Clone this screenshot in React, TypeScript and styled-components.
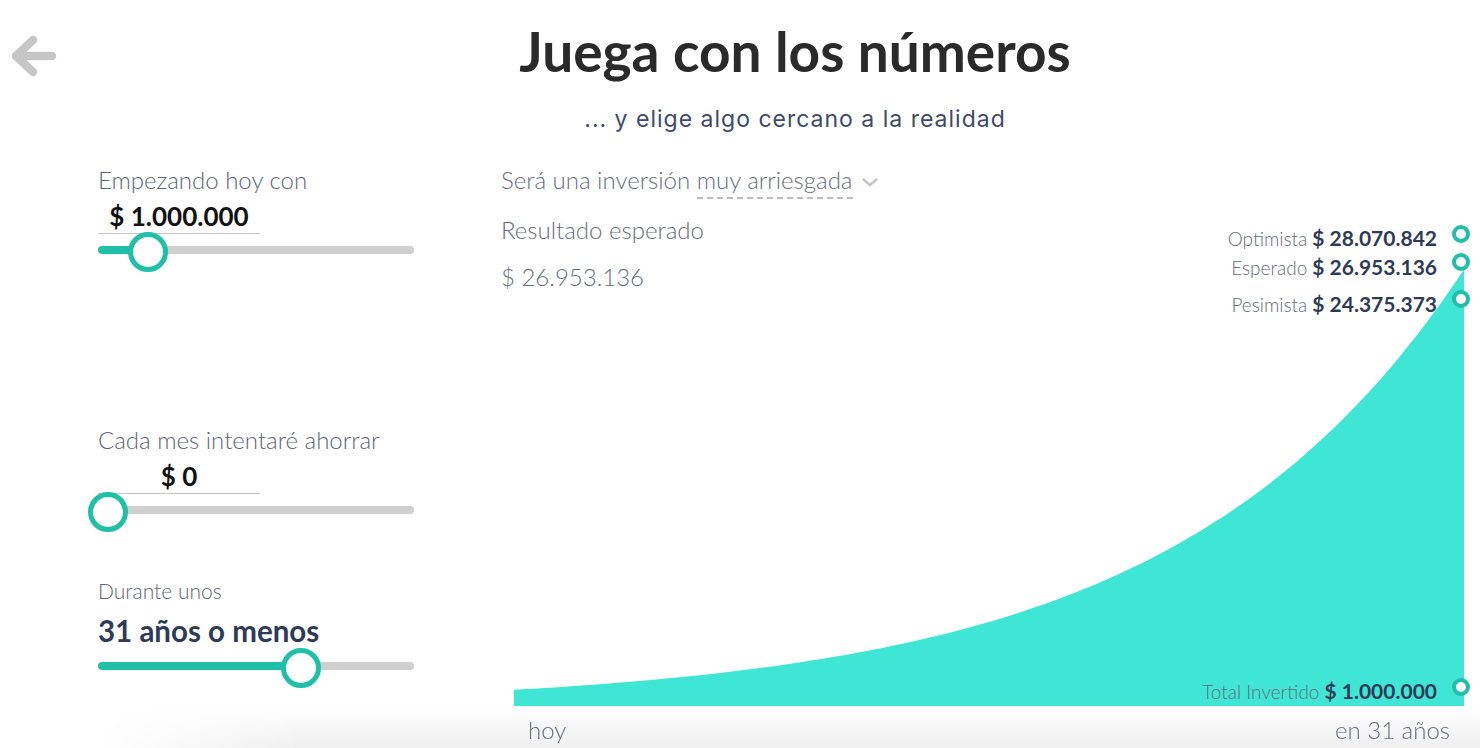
import React from "react";
import styled, { createGlobalStyle } from "styled-components";

const GlobalStyle = createGlobalStyle`
  html, body { margin: 0; padding: 0; background: #ffffff; }
  body { font-family: Lato, "Noto Sans", sans-serif; -webkit-font-smoothing: antialiased; }
  #root { width: 1480px; height: 748px; overflow: hidden; }
`;

const TEAL = "#1fbfa8";
const AREA = "#40e6d5";

const Page = styled.div`
  width: 1480px;
  height: 748px;
  display: flex;
  flex-direction: column;
  overflow: hidden;
`;

const Header = styled.header`
  display: grid;
  grid-template-columns: 110px 1fr;
  padding-top: 22px;
`;

const BackButton = styled.button`
  border: 0;
  background: none;
  padding: 0;
  margin: 10px 0 0 10px;
  width: 48px;
  height: 48px;
  align-self: start;
  cursor: pointer;
  display: block;
`;

const TitleBlock = styled.div`
  display: flex;
  flex-direction: column;
  align-items: center;
`;

const Title = styled.h1`
  margin: 0;
  height: 58px;
  font: 700 55px/58px Lato, sans-serif;
  color: #2a2a2a;
`;

const Subtitle = styled.p`
  margin: 28px 0 0;
  height: 22px;
  font: 400 23px/22px Inter, "Noto Sans", sans-serif;
  letter-spacing: 1px;
  color: #3f4a6a;
`;

const Body = styled.main`
  display: grid;
  grid-template-columns: 316px 1fr;
  column-gap: 87px;
  padding-left: 98px;
  margin-top: 38px;
  height: 538px;
`;

const Controls = styled.section`
  display: flex;
  flex-direction: column;
`;

const Field = styled.div<{ $gap: number }>`
  display: flex;
  flex-direction: column;
  margin-top: ${(p) => p.$gap}px;
`;

const FieldLabel = styled.label<{ $size?: number }>`
  font: 300 ${(p) => p.$size ?? 24}px/1 Lato, sans-serif;
  color: #5d6578;
`;

const AmountInput = styled.div`
  width: 162px;
  box-sizing: border-box;
  margin-top: 11px;
  padding-bottom: 4px;
  border-bottom: 1px solid #c6c6c6;
  text-align: center;
  font: 700 26px/1 Lato, sans-serif;
  color: #111111;
`;

const StrongValue = styled.div`
  margin-top: 15px;
  font: 700 29.5px/1 Lato, sans-serif;
  color: #2f3a56;
`;

const SliderRoot = styled.div<{ $offset: number }>`
  position: relative;
  height: 40px;
  margin-top: ${(p) => p.$offset}px;
`;

const Track = styled.div`
  position: absolute;
  left: 0;
  right: 0;
  top: 14px;
  height: 8px;
  border-radius: 4px;
  background: #cfcfcf;
  overflow: hidden;
`;

const Fill = styled.div`
  height: 100%;
  background: ${TEAL};
  border-radius: 4px;
`;

const Thumb = styled.div`
  position: absolute;
  top: 0;
  width: 40px;
  height: 40px;
  margin-left: -20px;
  box-sizing: border-box;
  border: 5px solid ${TEAL};
  border-radius: 50%;
  background: #ffffff;
`;

const Results = styled.section`
  display: grid;
`;

const Summary = styled.div`
  grid-area: 1 / 1;
  align-self: start;
  display: flex;
  flex-direction: column;
  align-items: flex-start;
  z-index: 1;
`;

const SummaryLine = styled.div<{ $gap?: number }>`
  margin-top: ${(p) => p.$gap ?? 0}px;
  font: 300 24px/1 Lato, sans-serif;
  color: #686e7e;
  display: flex;
  align-items: flex-start;
  white-space: pre;
`;

const RiskValue = styled.span`
  padding-bottom: 5px;
  border-bottom: 2px dashed #bdbdbd;
`;

const Chevron = styled.svg`
  margin: 10px 0 0 9px;
`;

const Chart = styled.div`
  grid-area: 1 / 1;
  position: relative;
  height: 538px;
`;

const ChartSvg = styled.svg`
  display: block;
`;

const Marker = styled.div<{ $top: number }>`
  position: absolute;
  right: 43px;
  top: ${(p) => p.$top}px;
  height: 24px;
  display: flex;
  align-items: baseline;
  gap: 5px;
  white-space: nowrap;
`;

const MarkerName = styled.span`
  font: 300 19px/24px Lato, sans-serif;
  color: #646b7c;
`;

const MarkerValue = styled.span`
  font: 700 21px/24px Lato, sans-serif;
  color: #2f3a56;
`;

const Footer = styled.footer`
  height: 42px;
  margin-left: 100px;
  box-sizing: border-box;
  padding: 12px 30px 0 428px;
  display: flex;
  justify-content: space-between;
  background: linear-gradient(180deg, #ffffff 0%, #efefef 100%);
  border-top-left-radius: 40px;
  -webkit-mask-image: linear-gradient(90deg, transparent 0, #000 200px);
  mask-image: linear-gradient(90deg, transparent 0, #000 200px);
  font: 300 24px/1 Lato, sans-serif;
  color: #686e7e;
`;

function Slider({ pct, fill, offset }: { pct: number; fill: number; offset: number }) {
  return (
    <SliderRoot $offset={offset}>
      <Track>
        <Fill style={{ width: `${fill}%` }} />
      </Track>
      <Thumb style={{ left: `${pct}%` }} />
    </SliderRoot>
  );
}

const CW = 979;
const CH = 538;
const X0 = 13;
const X1 = 963;
const START_H = 16.2;
const RATIO = 26.953136;

function buildArea() {
  const n = 80;
  const pts: string[] = [];
  for (let i = 0; i <= n; i++) {
    const t = i / n;
    const x = X0 + t * (X1 - X0);
    const h = START_H * Math.pow(RATIO, t);
    pts.push(`${x.toFixed(1)},${(CH - h).toFixed(1)}`);
  }
  return `M${X0},${CH} L${pts.join(" L")} L${X1},${CH} Z`;
}

const markers = [
  { name: "Optimista", value: "$ 28.070.842", top: 58, cy: 66 },
  { name: "Esperado", value: "$ 26.953.136", top: 87, cy: 94 },
  { name: "Pesimista", value: "$ 24.375.373", top: 124, cy: 131 },
  { name: "Total Invertido", value: "$ 1.000.000", top: 511, cy: 519 },
];

export default function App() {
  const area = buildArea();
  return (
    <Page>
      <GlobalStyle />
      <Header>
        <BackButton aria-label="Volver">
          <svg width="48" height="48" viewBox="0 0 48 48" fill="none">
            <path
              d="M23 8 L6 24 L23 40 M7 24 H42"
              stroke="#c6c6c6"
              strokeWidth="8.5"
              strokeLinecap="round"
              strokeLinejoin="round"
            />
          </svg>
        </BackButton>
        <TitleBlock>
          <Title>Juega con los números</Title>
          <Subtitle>... y elige algo cercano a la realidad</Subtitle>
        </TitleBlock>
      </Header>
      <Body>
        <Controls>
          <Field $gap={0}>
            <FieldLabel>Empezando hoy con</FieldLabel>
            <AmountInput>$ 1.000.000</AmountInput>
            <Slider pct={15.8} fill={15.8} offset={-2} />
          </Field>
          <Field $gap={156}>
            <FieldLabel>Cada mes intentaré ahorrar</FieldLabel>
            <AmountInput>$ 0</AmountInput>
            <Slider pct={3.2} fill={0} offset={-2} />
          </Field>
          <Field $gap={48}>
            <FieldLabel $size={21}>Durante unos</FieldLabel>
            <StrongValue>31 años o menos</StrongValue>
            <Slider pct={64.2} fill={64.2} offset={2} />
          </Field>
        </Controls>
        <Results>
          <Chart>
            <ChartSvg width={CW} height={CH} viewBox={`0 0 ${CW} ${CH}`}>
              <path d={area} fill={AREA} />
              {markers.map((m) => (
                <circle key={m.name} cx={960} cy={m.cy} r={7} fill="#ffffff" stroke={TEAL} strokeWidth={4} />
              ))}
            </ChartSvg>
            {markers.map((m) => (
              <Marker key={m.name} $top={m.top}>
                <MarkerName>{m.name}</MarkerName>
                <MarkerValue>{m.value}</MarkerValue>
              </Marker>
            ))}
          </Chart>
          <Summary>
            <SummaryLine>
              {"Será una inversión "}
              <RiskValue>muy arriesgada</RiskValue>
              <Chevron width="16" height="9" viewBox="0 0 16 9" fill="none">
                <path d="M1.5 1.5 L8 7 L14.5 1.5" stroke="#c4c4c4" strokeWidth="2.5" strokeLinecap="round" strokeLinejoin="round" />
              </Chevron>
            </SummaryLine>
            <SummaryLine $gap={19}>Resultado esperado</SummaryLine>
            <SummaryLine $gap={23}>$ 26.953.136</SummaryLine>
          </Summary>
        </Results>
      </Body>
      <Footer>
        <span>hoy</span>
        <span>en 31 años</span>
      </Footer>
    </Page>
  );
}
